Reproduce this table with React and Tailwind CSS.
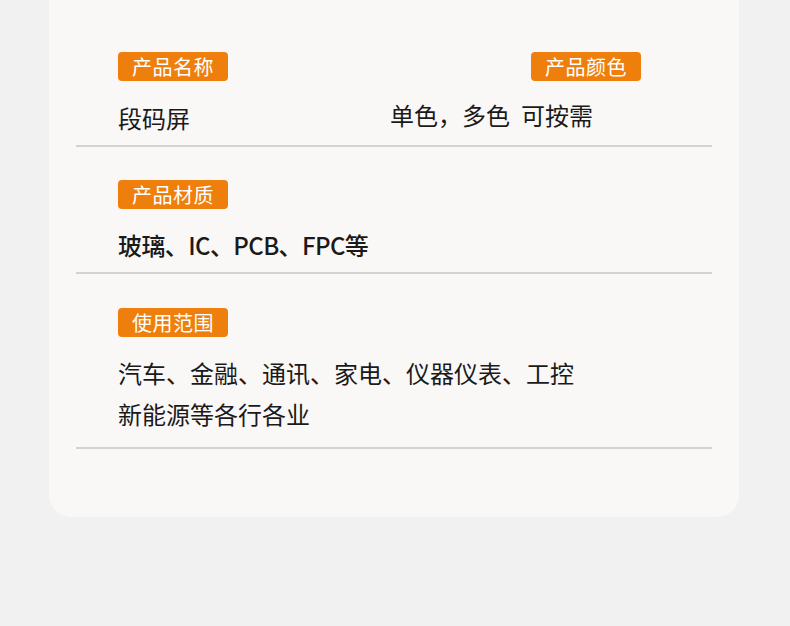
import React from 'react';

const Badge = ({ children }) => (
  <span className="inline-block h-[29px] px-[14px] rounded-[4px] bg-[#ef7f0c] text-white text-[20px] leading-[29px] tracking-[0.5px]">
    {children}
  </span>
);

export default function App() {
  return (
    <div
      className="w-[790px] h-[626px] bg-[#f1f1f1] overflow-hidden"
      style={{ fontFamily: '"Noto Sans CJK SC", "Noto Sans", sans-serif' }}
    >
      <div className="ml-[49px] w-[690px] h-[517px] bg-[#faf8f6] rounded-b-[22px] px-[27px] pt-[52px] text-[#1a1a1a]">

        {/* Name + colour */}
        <div className="border-b-2 border-[#d2d2d2] pb-[7px]">
          <div className="flex pl-[42px]">
            <Badge>产品名称</Badge>
            <div className="ml-auto mr-[71px]">
              <Badge>产品颜色</Badge>
            </div>
          </div>
          <div className="flex pl-[42px] mt-[17px] text-[24px] leading-[40px]">
            <span className="w-[272px]">段码屏</span>
            <span className="-mt-[3px]">
              单色，多色<span className="ml-[11px]">可按需</span>
            </span>
          </div>
        </div>

        {/* Material */}
        <div className="border-b-2 border-[#d2d2d2] pt-[33px] pb-[7px] pl-[42px]">
          <Badge>产品材质</Badge>
          <div className="mt-[16px] text-[24px] leading-[40px] font-medium tracking-[-0.6px]">
            玻璃、IC、PCB、FPC等
          </div>
        </div>

        {/* Usage */}
        <div className="border-b-2 border-[#d2d2d2] pt-[34px] pb-[13px] pl-[42px]">
          <Badge>使用范围</Badge>
          <div className="mt-[15px] text-[24px] leading-[41px]">
            <div>汽车、金融、通讯、家电、仪器仪表、工控</div>
            <div>新能源等各行各业</div>
          </div>
        </div>
      </div>
    </div>
  );
}
